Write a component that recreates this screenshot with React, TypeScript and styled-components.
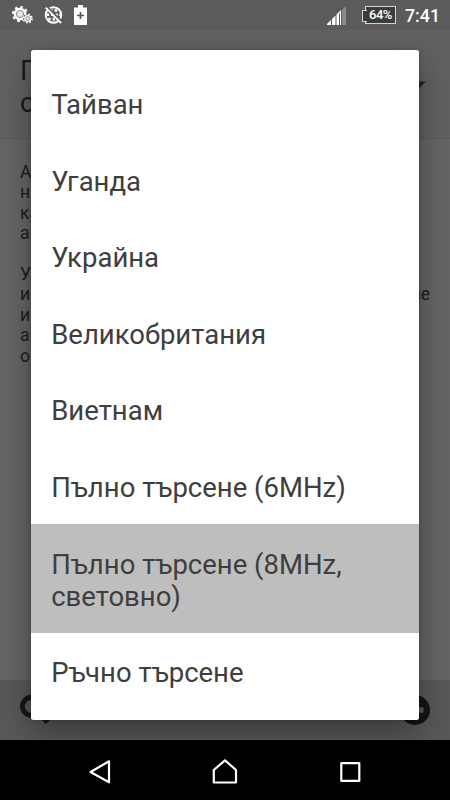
import React from "react";
import styled, { createGlobalStyle } from "styled-components";

const Global = createGlobalStyle`
  * { box-sizing: border-box; }
  html, body { margin: 0; padding: 0; background: #000; }
  body { font-family: Roboto, "Noto Sans", sans-serif; overflow: hidden; }
`;

const Phone = styled.div`
  position: relative;
  width: 450px;
  height: 800px;
  display: flex;
  flex-direction: column;
  overflow: hidden;
  background: #656565;
`;

const StatusBar = styled.header`
  position: relative;
  z-index: 3;
  height: 30px;
  flex: none;
  display: flex;
  align-items: center;
  justify-content: space-between;
  padding: 0 10px 0 12px;
  background: #5b5b5b;
  color: #fff;
`;

const StatusGroup = styled.div`
  display: flex;
  align-items: center;
`;

const Notifications = styled(StatusGroup)`
  gap: 10.5px;
`;

const SignalSlot = styled.span`
  display: flex;
  padding-top: 1px;
`;

const Battery = styled.div`
  position: relative;
  width: 31px;
  height: 18px;
  margin: 0 9px 0 19px;
  border: 1px solid #d4d4d4;
  background: #3c3c3c;
  display: flex;
  align-items: center;
  justify-content: center;
  font-size: 13px;
  line-height: 16px;
  font-weight: 500;
  letter-spacing: -0.5px;
  &::before {
    content: "";
    position: absolute;
    left: -4px;
    top: 3px;
    width: 4px;
    height: 10px;
    border: 1px solid #d4d4d4;
    border-right: 0;
    background: #3c3c3c;
  }
`;

const Clock = styled.span`
  font-size: 17.8px;
  line-height: 30px;
  font-weight: 500;
  padding-top: 1px;
  width: 35px;
`;

const Heading = styled.div`
  height: 109px;
  flex: none;
  display: flex;
  justify-content: space-between;
  padding: 24.6px 24px 0 20px;
  background: #616161;
  border-bottom: 1px solid #5b5b5b;
`;

const Title = styled.h1`
  margin: 0;
  font-size: 27.5px;
  line-height: 32px;
  font-weight: 400;
  color: #191919;
`;

const Arrow = styled.svg`
  margin-top: 26px;
`;

const Content = styled.main`
  flex: 1;
  padding: 22.6px 20px 0 20px;
  font-size: 17.5px;
  line-height: 20.5px;
  color: #1b1b1b;
`;

const Paragraph = styled.p`
  margin: 0 0 20px;
`;

const Line = styled.span`
  display: flex;
  justify-content: space-between;
`;

const Toolbar = styled.footer`
  height: 60px;
  flex: none;
  display: flex;
  justify-content: space-between;
  align-items: center;
  padding: 0 20px;
  background: #585858;
`;

const NavBar = styled.nav`
  position: relative;
  z-index: 3;
  height: 60px;
  flex: none;
  display: flex;
  justify-content: space-between;
  align-items: center;
  padding: 4px 85px 0 85px;
  background: #000;
`;

const Dialog = styled.section`
  position: absolute;
  z-index: 2;
  left: 31px;
  top: 50px;
  width: 388px;
  height: 670px;
  padding-top: 14.7px;
  border-radius: 2.5px;
  overflow: hidden;
  background: #fff;
  box-shadow: 0 14px 32px rgba(0, 0, 0, 0.34), 0 0 5px rgba(0, 0, 0, 0.2);
`;

const Options = styled.ul`
  margin: 0;
  padding: 0;
  list-style: none;
`;

const Option = styled.li<{ $selected?: boolean }>`
  padding: 24.2px 20px 20.4px 20.2px;
  font-size: 27.5px;
  line-height: 32.05px;
  color: #3e3e3e;
  background: ${({ $selected }) => ($selected ? "#bebebe" : "transparent")};
`;

const options = [
  "Тайван",
  "Уганда",
  "Украйна",
  "Великобритания",
  "Виетнам",
  "Пълно търсене (6MHz)",
  "Пълно търсене (8MHz, световно)",
  "Ръчно търсене",
];

const Gears = () => (
  <svg width="21" height="20" viewBox="0 0 21 20" fill="none" stroke="#fff">
    <circle cx="8" cy="9" r="6.3" fill="#fff" stroke="none" />
    <circle cx="8" cy="9" r="6.9" strokeWidth="2.4" strokeDasharray="2.71 2.71" />
    <circle cx="8" cy="9" r="3.6" stroke="#8a8a8a" strokeWidth="1" fill="#e4e4e4" />
    <circle cx="15.8" cy="13.5" r="4.8" fill="#5b5b5b" stroke="none" />
    <circle cx="15.8" cy="13.5" r="3.6" fill="#fff" stroke="none" />
    <circle cx="15.8" cy="13.5" r="4.2" strokeWidth="1.6" strokeDasharray="1.65 1.65" />
    <circle cx="15.8" cy="13.5" r="2" stroke="#8a8a8a" strokeWidth="0.9" fill="#e4e4e4" />
  </svg>
);

const GlobeOff = () => (
  <svg width="19" height="20" viewBox="0 0 20 20" fill="none">
    <circle cx="10" cy="10" r="8.2" stroke="#fff" strokeWidth="2" fill="#5b5b5b" />
    <path
      d="M6 4h3v2.500H6zM11 4h3v2.500h-3zM3 8.500h2.500V11H3zM7.500 8.500H10V11H7.500zM12 8.500h2.500V11H12zM16 8.500h2V11h-2zM4.500 13H7v2.500H4.500zM9 13h2.500v3H9zM13.500 13H16v2.500h-2.500z"
      fill="#fff"
    />
    <path d="M3.5 1.5 19 17" stroke="#5b5b5b" strokeWidth="2.2" />
    <path d="M1.8 2.2 18 18.5" stroke="#fff" strokeWidth="2" />
  </svg>
);

const BatteryPlus = () => (
  <svg width="15" height="20" viewBox="0 0 15 20">
    <path d="M5 0h5v2.500H14V20H1V2.500h4z" fill="#fff" />
    <path d="M7.5 7v7M4 10.500h7" stroke="#555" strokeWidth="1.7" />
  </svg>
);

const Signal = () => (
  <svg width="19" height="20" viewBox="0 0 19 20">
    <path d="M0 19v-1l4-4v5zM5 19v-6l3.500-3.500V19zM9.500 19V8.500L14 4v15h-1V7l-1 1v11z" fill="#fff" />
    <path d="M15 19V4L19 0v19z" fill="#888" />
  </svg>
);

export default function App() {
  return (
    <>
      <Global />
      <Phone>
        <StatusBar>
          <Notifications>
            <Gears />
            <GlobeOff />
            <BatteryPlus />
          </Notifications>
          <StatusGroup>
            <SignalSlot>
              <Signal />
            </SignalSlot>
            <Battery>64%</Battery>
            <Clock>7:41</Clock>
          </StatusGroup>
        </StatusBar>
        <Heading>
          <Title>
            П<br />с
          </Title>
          <Arrow width="14" height="8" viewBox="0 0 14 8">
            <path d="M0 0.500h14L7 7.500z" fill="#242424" />
          </Arrow>
        </Heading>
        <Content>
          <Paragraph>
            <Line>А</Line>
            <Line>на</Line>
            <Line>ка</Line>
            <Line>ав</Line>
          </Paragraph>
          <Paragraph>
            <Line>У</Line>
            <Line>
              <span>и</span>
              <span>не</span>
            </Line>
            <Line>из</Line>
            <Line>ав</Line>
            <Line>о</Line>
          </Paragraph>
        </Content>
        <Toolbar>
          <svg width="32" height="32" viewBox="0 0 32 32" fill="none" stroke="#171717">
            <circle cx="11.5" cy="12.3" r="9" strokeWidth="5" />
            <path d="M18.5 18.500 28 28" strokeWidth="6" />
          </svg>
          <svg width="30" height="30" viewBox="0 0 30 30">
            <circle cx="15" cy="15" r="15" fill="#141414" />
            <path d="M6.500 15h17M15 6.500v17" stroke="#5b5b5b" strokeWidth="5.5" />
          </svg>
        </Toolbar>
        <NavBar>
          <svg width="30" height="30" viewBox="0 0 30 30" fill="none" stroke="#fff" strokeWidth="2.2" strokeLinejoin="round">
            <path d="M5.5 15 24 4.300v21z" />
          </svg>
          <svg width="30" height="30" viewBox="0 0 30 30" fill="none" stroke="#fff" strokeWidth="2.2" strokeLinejoin="round">
            <path d="M3.8 25.500V13L15 3.300 26 13v12.500z" />
          </svg>
          <svg width="30" height="30" viewBox="0 0 30 30" fill="none" stroke="#fff" strokeWidth="2.2" strokeLinejoin="round">
            <path d="M6.3 6.200h18v17.700h-18z" />
          </svg>
        </NavBar>
        <Dialog>
          <Options>
            {options.map((label, i) => (
              <Option key={label} $selected={i === 6}>
                {label}
              </Option>
            ))}
          </Options>
        </Dialog>
      </Phone>
    </>
  );
}
